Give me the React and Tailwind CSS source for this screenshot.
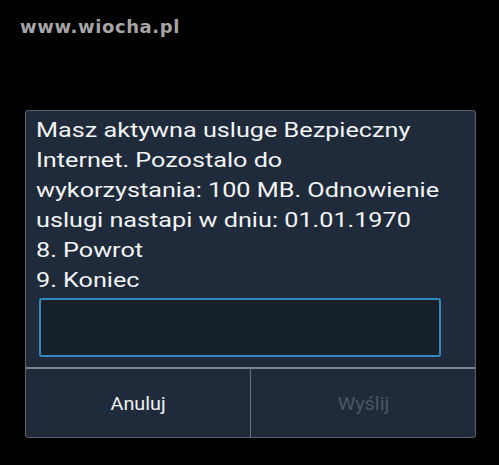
import React from 'react';

const lines = [
    'Masz aktywna usluge Bezpieczny',
    'Internet. Pozostalo do',
    'wykorzystania: 100 MB. Odnowienie',
    'uslugi nastapi w dniu: 01.01.1970',
    '8. Powrot',
    '9. Koniec',
];

const App = () => {
    return (
        <div className="w-[499px] h-[465px] bg-black overflow-hidden" style={{ fontFamily: 'Roboto, "Noto Sans", sans-serif' }}>
            <div
                className="pl-[20px] pt-[14px] h-[110px] text-[18px] font-bold text-[#a6a6a6] leading-[26px] tracking-[0.6px]"
                style={{ fontFamily: '"DejaVu Sans", sans-serif' }}
            >
                www.wiocha.pl
            </div>
            <div className="ml-[25px] w-[451px] h-[328px] bg-[#1f2b3a] border border-[#59626c] rounded-[3px] flex flex-col">
                <div className="pl-[10px] pr-[14px] pt-[4px]">
                    <div className="text-[21px] leading-[30px] text-[#f2f4f6] origin-left scale-x-[1.2]">
                        {lines.map((l) => (
                            <div key={l} className="whitespace-nowrap">{l}</div>
                        ))}
                    </div>
                    <div className="mt-[3px] ml-[3px] w-[402px] h-[59px] bg-[#17212a] border-2 border-[#3189bf] rounded-[3px]" />
                </div>
                <div className="mt-[10px] flex-1 border-t-2 border-[#7d848b] flex">
                    <div className="w-[225px] border-r border-[#6c737a] flex items-center justify-center text-[18px] text-[#eef0f2]">
                        <span className="scale-x-[1.1]">Anuluj</span>
                    </div>
                    <div className="flex-1 flex items-center justify-center text-[18px] text-[#4b5662]">
                        <span className="scale-x-[1.1]">Wyślij</span>
                    </div>
                </div>
            </div>
        </div>
    );
};

export default App;
